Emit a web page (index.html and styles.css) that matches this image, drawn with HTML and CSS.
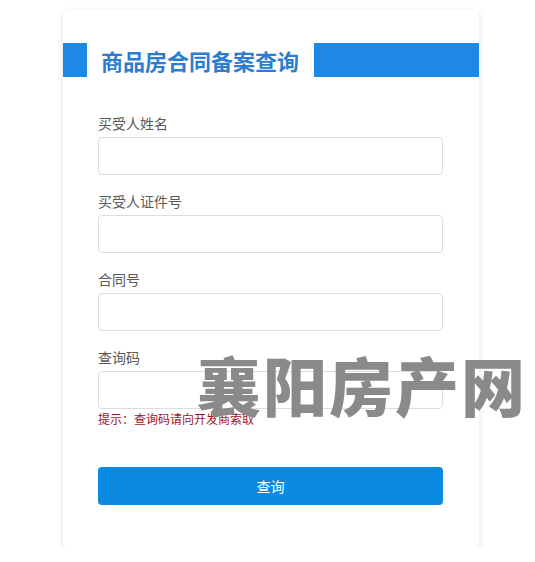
FILE: index.html
```html
<!DOCTYPE html>
<html lang="zh-CN">
<head>
	<meta charset="UTF-8">
	<title>商品房合同备案查询</title>
	<link rel="stylesheet" href="styles.css">
</head>
<body>
	<div class="card">
		<div class="card-head">
			<span class="head-bar head-left"></span>
			<h1 class="head-title">商品房合同备案查询</h1>
			<span class="head-bar head-right"></span>
		</div>

		<form class="query-form">
			<div class="field">
				<label>买受人姓名</label>
				<input type="text">
			</div>
			<div class="field">
				<label>买受人证件号</label>
				<input type="text">
			</div>
			<div class="field">
				<label>合同号</label>
				<input type="text">
			</div>
			<div class="field field-last">
				<label>查询码</label>
				<input type="text">
				<p class="hint">提示：查询码请向开发商索取</p>
			</div>
			<button type="button" class="btn-query">查询</button>
		</form>

		<div class="watermark">襄阳房产网</div>
	</div>
</body>
</html>
```

FILE: styles.css
```css
body {
	margin: 0;
	background: #fff;
	font-family: "Noto Sans CJK SC", "Liberation Sans", sans-serif;
}

.card {
	position: relative;
	width: 416px;
	margin: 10px 0 0 63px;
	padding: 33px 0 42px;
	background: #fff;
	border-radius: 4px;
	box-shadow: 0 2px 6px rgba(0, 0, 0, 0.12);
}

.card-head {
	display: flex;
	align-items: center;
	height: 34px;
}

.head-bar {
	height: 34px;
	background: #1e88e5;
}

.head-left {
	width: 24px;
}

.head-right {
	flex: 1;
}

.head-title {
	margin: 0 15px 0 14px;
	font-size: 22px;
	font-weight: bold;
	color: #2a7dd1;
	line-height: 34px;
}

.query-form {
	padding: 36px 36px 0 35px;
}

.field {
	display: flex;
	flex-direction: column;
	margin-bottom: 16px;
}

.field label {
	height: 20px;
	line-height: 20px;
	font-size: 14px;
	color: #5a5a5a;
	margin-bottom: 4px;
}

.field input {
	box-sizing: border-box;
	height: 38px;
	border: 1px solid #ddd;
	border-radius: 4px;
	outline: none;
}

.field-last {
	margin-bottom: 0;
}

.hint {
	margin: 2px 0 0;
	font-size: 12px;
	line-height: 16px;
	color: #a0141e;
}

.btn-query {
	display: block;
	width: 100%;
	height: 38px;
	margin-top: 40px;
	border: none;
	border-radius: 4px;
	background: #0a8ae0;
	color: #fff;
	font-family: inherit;
	font-size: 14px;
}

.watermark {
	position: absolute;
	left: 134px;
	top: 327px;
	font-size: 64px;
	font-weight: 900;
	letter-spacing: 2px;
	color: #8a8a8a;
	white-space: nowrap;
}
```
